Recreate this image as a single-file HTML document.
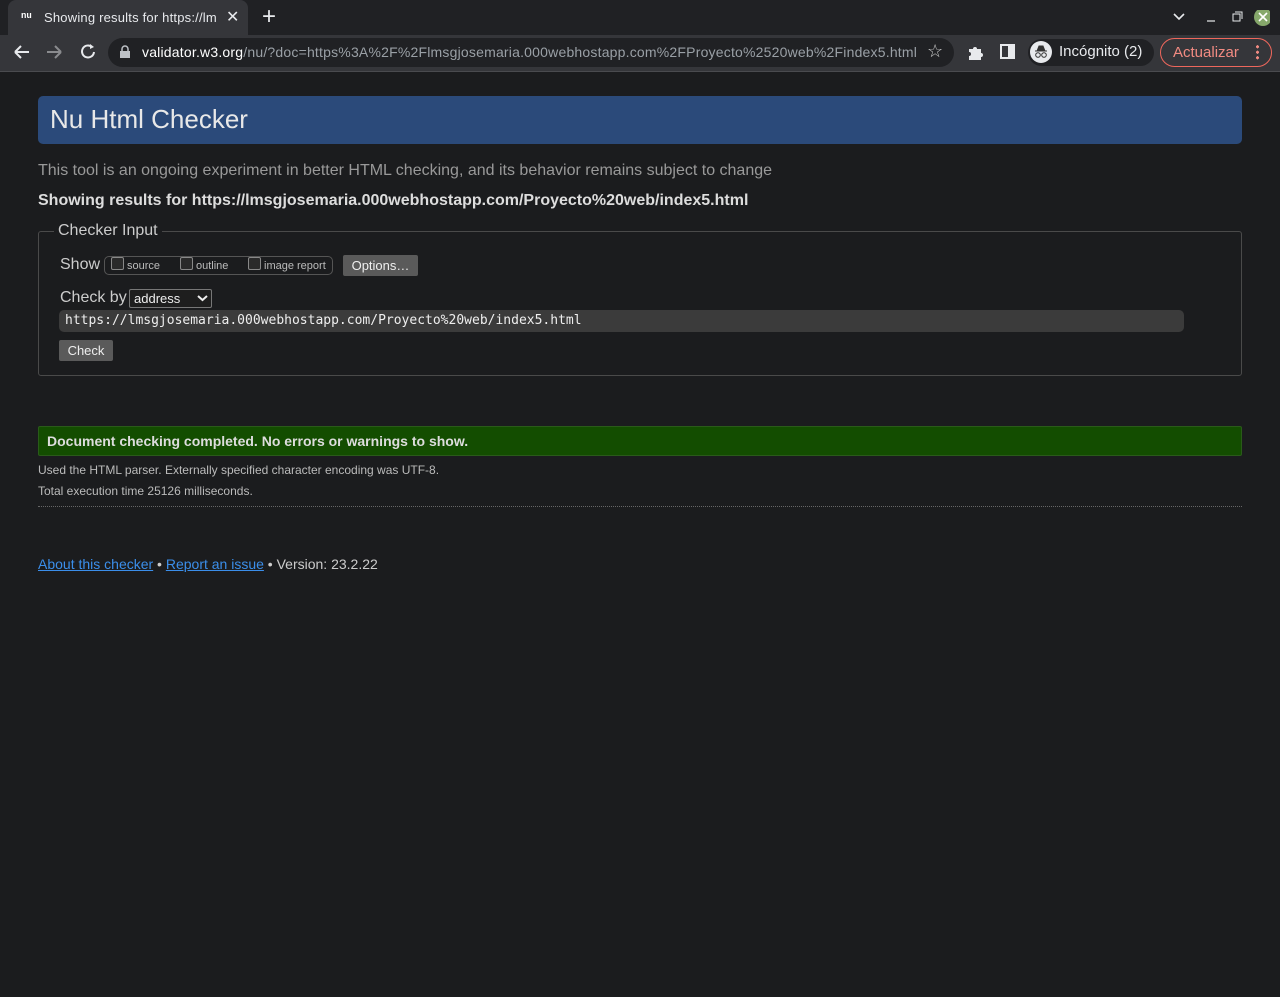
<!DOCTYPE html>
<html><head><meta charset="utf-8"><style>
*{box-sizing:border-box;margin:0;padding:0}
body{width:1280px;height:997px;background:#1b1c1e;font-family:"Liberation Sans",sans-serif;position:relative;overflow:hidden;color:#ddd}
.abs{position:absolute}
#tabs{left:0;top:0;width:1280px;height:35px;background:#202124}
#tab{left:8px;top:0;width:240px;height:35px;background:#35363a;border-radius:8px 8px 0 0}
#bar{left:0;top:35px;width:1280px;height:37px;background:#35363a;border-bottom:1px solid #4a4b4f}
#omni{left:108px;top:38px;width:846px;height:29px;background:#202124;border-radius:15px}
.t{font-size:14px;color:#e8eaed;white-space:nowrap}
</style></head><body>
<div id="tabs" class="abs"></div>
<div id="tab" class="abs"></div>
<div class="abs" style="left:21px;top:11px;font:bold 9px 'Liberation Mono',monospace;color:#fff">nu</div>
<div class="abs t" style="left:44px;top:10px;font-size:13px;width:175px;overflow:hidden;letter-spacing:0.2px">Showing results for https://lm</div>
<div class="abs t" style="left:226px;top:7px;font-size:16px">✕</div>
<div class="abs t" style="left:262px;top:3px;font-size:24px;font-weight:300">+</div>
<svg class="abs" style="left:1170px;top:10px" width="100" height="16"><path d="M4 4l5 5 5-5" stroke="#e8eaed" stroke-width="1.6" fill="none"/><path d="M37 11h8" stroke="#e8eaed" stroke-width="1.2"/><rect x="63" y="4" width="7" height="7" stroke="#e8eaed" fill="none"/><path d="M65 2h7v7" stroke="#e8eaed" fill="none"/><circle cx="93" cy="7" r="9" fill="#86a86b"/><path d="M89 3l8 8M97 3l-8 8" stroke="#fff" stroke-width="1.6"/></svg>
<div id="bar" class="abs"></div>
<svg class="abs" style="left:12px;top:42px" width="90" height="20"><path d="M3 10h14M3 10l6-6M3 10l6 6" stroke="#e8eaed" stroke-width="2" fill="none"/><path d="M35 10h14M49 10l-6-6M49 10l-6 6" stroke="#8a8b8e" stroke-width="2" fill="none"/><path d="M80 5a6 6 0 1 0 2 5" stroke="#e8eaed" stroke-width="2" fill="none"/><path d="M78 2l4 3-4 2z" fill="#e8eaed"/></svg>
<div id="omni" class="abs"></div>
<svg class="abs" style="left:119px;top:45px" width="12" height="14"><rect x="1" y="6" width="10" height="7" fill="#bdc1c6"/><path d="M3 6V4a3 3 0 0 1 6 0v2" stroke="#bdc1c6" stroke-width="1.5" fill="none"/></svg>
<div class="abs t" style="left:142px;top:44px;letter-spacing:0.2px"><span style="color:#fff">validator.w3.org</span><span style="color:#9aa0a6">/nu/?doc=https%3A%2F%2Flmsgjosemaria.000webhostapp.com%2FProyecto%2520web%2Findex5.html</span></div>
<div class="abs t" style="left:927px;top:41px;font-size:18px;color:#ccc">☆</div>
<svg class="abs" style="left:966px;top:43px" width="20" height="18"><path d="M3 6h4a2 2 0 1 1 4 0h4v4a2 2 0 1 1 0 4v3H3v-4a2 2 0 1 0 0-4z" fill="#e8eaed"/></svg>
<svg class="abs" style="left:1000px;top:44px" width="16" height="16"><rect x="1" y="1" width="13" height="13" stroke="#e8eaed" stroke-width="2" fill="none"/><rect x="8" y="1" width="6" height="13" fill="#e8eaed"/></svg>
<div class="abs" style="left:1028px;top:39px;width:126px;height:27px;background:#202124;border-radius:14px"></div>
<svg class="abs" style="left:1030px;top:41px" width="22" height="22"><circle cx="11" cy="11" r="11" fill="#e8eaed"/><path d="M5 10h12M7 10l2-5h4l2 5" fill="#333" stroke="#333"/><circle cx="8" cy="14" r="2.3" stroke="#333" fill="none"/><circle cx="14" cy="14" r="2.3" stroke="#333" fill="none"/></svg>
<div class="abs t" style="left:1059px;top:43px;font-size:15px">Incógnito (2)</div>
<div class="abs" style="left:1160px;top:38px;width:112px;height:29px;border:1px solid #ee675c;border-radius:15px"></div>
<div class="abs t" style="left:1173px;top:44px;font-size:15px;color:#f28b82">Actualizar</div>
<div class="abs" style="left:1256px;top:44px;width:3px;height:16px;background:radial-gradient(circle,#f28b82 1.5px,transparent 1.6px) 0 0/3px 5.5px"></div>

<div class="abs" style="left:38px;top:96px;width:1204px;height:48px;background:#2b4a7a;border-radius:5px"></div>
<div class="abs" style="left:50px;top:104px;font-size:26px;color:#e8e8e8">Nu Html Checker</div>
<div class="abs" style="left:38px;top:162px;font-size:16px;color:#999">This tool is an ongoing experiment in better HTML checking, and its behavior remains subject to change</div>
<div class="abs" style="left:38px;top:192px;font-size:16px;font-weight:bold;color:#ddd">Showing results for https://lmsgjosemaria.000webhostapp.com/Proyecto%20web/index5.html</div>

<div class="abs" style="left:38px;top:231px;width:1204px;height:145px;border:1px solid #4a4a4a;border-radius:3px"></div>
<div class="abs" style="left:54px;top:222px;padding:0 4px;background:#1b1c1e;font-size:16px;color:#ccc">Checker Input</div>
<div class="abs" style="left:60px;top:256px;font-size:16px;color:#ccc">Show</div>
<div class="abs" style="left:104px;top:256px;width:229px;height:19px;border:1px solid #555;border-radius:5px"></div>
<div class="abs" style="left:111px;top:257px;width:13px;height:13px;border:1px solid #888;border-radius:2px;background:#2a2a2a"></div>
<div class="abs" style="left:127px;top:260px;font-size:11px;color:#bbb">source</div>
<div class="abs" style="left:180px;top:257px;width:13px;height:13px;border:1px solid #888;border-radius:2px;background:#2a2a2a"></div>
<div class="abs" style="left:196px;top:260px;font-size:11px;color:#bbb">outline</div>
<div class="abs" style="left:248px;top:257px;width:13px;height:13px;border:1px solid #888;border-radius:2px;background:#2a2a2a"></div>
<div class="abs" style="left:264px;top:260px;font-size:11px;color:#bbb">image report</div>
<div class="abs" style="left:343px;top:255px;width:75px;height:21px;background:#5a5a5a;border-radius:2px;font-size:13px;color:#eee;text-align:center;line-height:21px">Options…</div>
<div class="abs" style="left:60px;top:289px;font-size:16px;color:#ccc">Check by</div>
<div class="abs" style="left:129px;top:289px;width:83px;height:19px;border:1px solid #777;border-radius:2px;background:#1e1e1e;font-size:13px;color:#eee;padding:1px 4px">address</div>
<svg class="abs" style="left:197px;top:294px" width="11" height="9"><path d="M1 2l4.5 4 4.5-4" stroke="#eee" stroke-width="2" fill="none"/></svg>
<div class="abs" style="left:59px;top:310px;width:1125px;height:22px;background:#3b3b3b;border-radius:5px"></div>
<div class="abs" style="left:65px;top:313px;font:13px 'DejaVu Sans Mono',monospace;color:#eee">https://lmsgjosemaria.000webhostapp.com/Proyecto%20web/index5.html</div>
<div class="abs" style="left:59px;top:340px;width:54px;height:21px;background:#5a5a5a;border-radius:2px;font-size:13px;color:#eee;text-align:center;line-height:21px">Check</div>

<div class="abs" style="left:38px;top:426px;width:1204px;height:30px;background:#134d00;border:1px solid #2a5a1a;border-radius:2px"></div>
<div class="abs" style="left:47px;top:433px;font-size:14px;font-weight:bold;color:#ddd">Document checking completed. No errors or warnings to show.</div>
<div class="abs" style="left:38px;top:463px;font-size:12px;color:#bbb">Used the HTML parser. Externally specified character encoding was UTF-8.</div>
<div class="abs" style="left:38px;top:484px;font-size:12px;color:#bbb">Total execution time 25126 milliseconds.</div>
<div class="abs" style="left:38px;top:506px;width:1204px;border-top:1px dotted #666"></div>
<div class="abs" style="left:38px;top:556px;font-size:14px;color:#ccc"><u style="color:#3b8eea">About this checker</u> • <u style="color:#3b8eea">Report an issue</u> • Version: 23.2.22</div>
</body></html>
